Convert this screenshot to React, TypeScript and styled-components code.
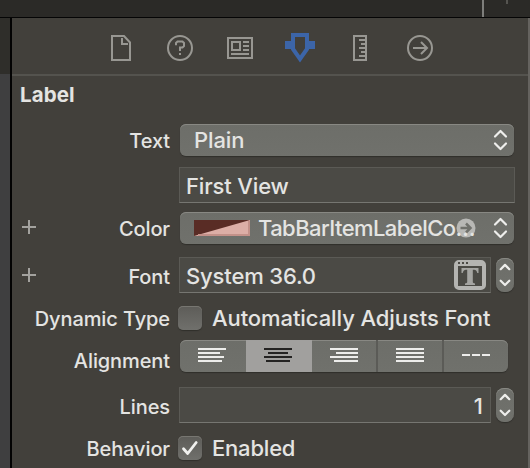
import React from 'react';
import styled, { createGlobalStyle, css } from 'styled-components';

const GlobalStyle = createGlobalStyle`
  * { box-sizing: border-box; }
  body { margin: 0; overflow: hidden; background: #42403b; }
`;

const Window = styled.div`
  width: 530px;
  height: 468px;
  display: flex;
  flex-direction: column;
  overflow: hidden;
  background: #42403b;
  color: #e4e4e2;
  font-family: Inter, 'Liberation Sans', sans-serif;
  font-weight: 500;
`;

const TitleStrip = styled.div`
  height: 18px;
  flex: none;
  display: flex;
  align-items: flex-start;
  padding-left: 482px;
  gap: 22px;
  background: #2b2a27;
  border-bottom: 1px solid #050505;
`;

const Tick = styled.span<{ $height: number; $color: string }>`
  width: 2px;
  height: ${p => p.$height}px;
  background: ${p => p.$color};
`;

const Body = styled.div`
  flex: 1;
  min-height: 0;
  display: flex;
`;

const Gutter = styled.div`
  width: 12px;
  flex: none;
  border-right: 2px solid #030303;
  background: linear-gradient(#2f2e2a 56px, #3f3f40 56px);
`;

const Inspector = styled.section`
  width: 518px;
  border-right: 2px solid #65635f;
`;

const Tabs = styled.nav`
  height: 58px;
  display: flex;
  justify-content: center;
  gap: 30px;
  padding-top: 15px;
  border-bottom: 2px solid #54534e;
`;

const Tab = styled.button<{ $active?: boolean }>`
  width: 30px;
  height: 30px;
  padding: 0;
  border: 0;
  background: none;
  color: ${p => (p.$active ? '#3c65a8' : '#989792')};
  svg { display: block; }
`;

const Heading = styled.h2`
  margin: 0;
  height: 48px;
  padding: 6px 0 0 8px;
  font-size: 20.5px;
  line-height: 25px;
  font-weight: 700;
  letter-spacing: 0.1px;
`;

const Row = styled.div<{ $height: number; $gap?: number }>`
  height: ${p => p.$height}px;
  margin-top: ${p => p.$gap ?? 0}px;
  display: flex;
  align-items: center;
`;

const RowLabel = styled.div<{ $drop?: number; $plusDrop?: number }>`
  width: 158px;
  flex: none;
  display: flex;
  justify-content: flex-end;
  align-items: center;
  margin-right: 10px;
  font-size: 20px;
  line-height: 24px;
  letter-spacing: -0.1px;
  white-space: nowrap;
  span { padding-top: ${p => p.$drop ?? 0}px; }
  svg { margin: ${p => p.$plusDrop ?? 0}px auto 2px 10px; }
`;

const raised = css`
  background: linear-gradient(#6d6e69, #70716c);
  box-shadow: inset 0 1px 0 #888883, 0 1px 1px #302f2b;
`;

const Popup = styled.div`
  width: 334px;
  height: 32px;
  display: flex;
  align-items: center;
  padding: 0 6px 0 14px;
  border-radius: 6px;
  ${raised}
`;

const Value = styled.span<{ $spacing?: number }>`
  flex: 1;
  font-size: 22px;
  line-height: 28px;
  letter-spacing: ${p => p.$spacing ?? 0}px;
  white-space: nowrap;
`;

const Swatch = styled.svg`
  margin-right: 8px;
  flex: none;
`;

const ColorName = styled(Value)`
  position: relative;
  isolation: isolate;
`;

const Jump = styled.svg`
  position: absolute;
  z-index: -1;
  left: 198px;
  top: 4px;
`;

const Field = styled.div<{ $wide?: boolean; $end?: boolean }>`
  width: ${p => (p.$wide ? 336 : 312)}px;
  height: 36px;
  margin-left: -1px;
  display: flex;
  align-items: center;
  padding: 0 ${p => (p.$end ? 7 : 4)}px 0 6px;
  text-align: ${p => (p.$end ? 'right' : 'left')};
  background: #4b4a45;
  border: 1px solid #5b5a55;
  border-bottom-color: #767671;
  ${Value} { padding-top: 2px; }
`;

const StepperBox = styled.div`
  width: 18px;
  height: 34px;
  margin-left: 5px;
  border-radius: 8px;
  ${raised}
  svg { display: block; }
`;

const CheckBox = styled.span`
  width: 24px;
  height: 24px;
  margin: 0 10px 0 -2px;
  border-radius: 5px;
  background: linear-gradient(#5d5c58, #70706c);
  box-shadow: inset 0 1px 0 #777671, 0 1px 1px #302f2b;
  svg { display: block; }
`;

const Segments = styled.div`
  width: 328px;
  height: 32px;
  display: grid;
  grid-template-columns: 66px 66px 66px 66px 64px;
  border-radius: 6px;
  overflow: hidden;
  ${raised}
`;

const Segment = styled.button<{ $selected?: boolean; $divided?: boolean }>`
  display: flex;
  align-items: flex-start;
  justify-content: flex-start;
  padding: 0;
  border: 0;
  border-right: ${p => (p.$divided ? '2px solid #5b5b57' : '0')};
  background: ${p => (p.$selected ? '#a1a09e' : 'none')};
  color: ${p => (p.$selected ? '#242322' : '#ededeb')};
`;

function Plus() {
  return (
    <svg width="14" height="14" viewBox="0 0 14 14" stroke="#a3a29e" strokeWidth="2">
      <path d="M7 0v14M0 7h14" />
    </svg>
  );
}

function PopupArrows() {
  return (
    <svg width="15" height="22" viewBox="0 0 15 22" fill="none" stroke="#eeeeec" strokeWidth="2.2" strokeLinecap="round" strokeLinejoin="round">
      <path d="M2 7.5 7.5 2 13 7.5M2 14.5 7.5 20 13 14.5" />
    </svg>
  );
}

function Stepper() {
  return (
    <StepperBox>
      <svg width="18" height="34" viewBox="0 0 18 34" fill="none" stroke="#eeeeec" strokeWidth="2.2" strokeLinecap="round" strokeLinejoin="round">
        <path d="M4.7 11.2 9 6.9l4.3 4.3M4.7 22.7 9 27l4.3-4.3" />
      </svg>
    </StepperBox>
  );
}

function TabIcon({ children }: { children: React.ReactNode }) {
  return <svg width="30" height="30" viewBox="0 0 30 30" fill="none" stroke="currentColor" strokeWidth="2">{children}</svg>;
}

// Each bar is [x, y, width] inside a segment.
const alignments: [number, number, number][][] = [
  [[18, 8, 28], [18, 12, 22], [18, 16, 26], [18, 20, 24]],
  [[18, 8, 28], [22, 12, 20], [18, 16, 28], [20, 20, 24]],
  [[18, 8, 28], [24, 12, 22], [18, 16, 28], [22, 20, 24]],
  [[18, 8, 28], [18, 12, 28], [18, 16, 28], [18, 20, 28]],
  [[18, 14, 8], [28, 14, 8], [38, 14, 8]],
];

export default function App() {
  return (
    <>
      <GlobalStyle />
      <Window>
        <TitleStrip>
          <Tick $height={17} $color="#7e7e7b" />
          <Tick $height={4} $color="#555450" />
        </TitleStrip>
        <Body>
          <Gutter />
          <Inspector>
            <Tabs>
              <Tab aria-label="File">
                <TabIcon><path d="M7 3h12l6 6.5V27H7Z" /><path d="M17 5v6h6" /></TabIcon>
              </Tab>
              <Tab aria-label="Help">
                <TabIcon><circle cx="15" cy="15" r="12" /><path d="M11 12.2V10l1.5-1.5h5L19 10v3l-1.5 1.5H15V18M15 20v2" /></TabIcon>
              </Tab>
              <Tab aria-label="Identity">
                <TabIcon><path d="M3 5h24v20H3ZM7 9h8v8H7ZM18 9h6M18 13h6M18 17h6M6 21h18" /></TabIcon>
              </Tab>
              <Tab aria-label="Attributes" $active>
                <TabIcon><path d="M0 8h8v8H0ZM22 8h8v8h-8Z" fill="currentColor" stroke="none" /><path d="M8 2h14v14l-7 10-7-10Z" strokeWidth="4" stroke="currentColor" strokeMiterlimit="8" /></TabIcon>
              </Tab>
              <Tab aria-label="Size">
                <TabIcon><path d="M9 3h12v24H9ZM14 7h6M16 11h4M14 15h6M16 19h4M14 23h6" /></TabIcon>
              </Tab>
              <Tab aria-label="Connections">
                <TabIcon><circle cx="15" cy="15" r="12" /><path d="M8 15h13M16 9l6 6-6 6" /></TabIcon>
              </Tab>
            </Tabs>
            <Heading>Label</Heading>
            <Row $height={32}>
              <RowLabel $drop={1}><span>Text</span></RowLabel>
              <Popup><Value $spacing={-0.1}>Plain</Value><PopupArrows /></Popup>
            </Row>
            <Row $height={36} $gap={11}>
              <RowLabel />
              <Field $wide><Value $spacing={-0.15}>First View</Value></Field>
            </Row>
            <Row $height={32} $gap={9}>
              <RowLabel $drop={1}><Plus /><span>Color</span></RowLabel>
              <Popup>
                <Swatch width="56" height="16" viewBox="0 0 56 16">
                  <path d="M0 0h56v16H0Z" fill="#592c25" />
                  <path d="M56 0v16H0Z" fill="#dcaea6" />
                  <path d="M55 1v14H4" fill="none" stroke="#c39189" strokeWidth="2" />
                </Swatch>
                <ColorName $spacing={-0.57}>
                  TabBarItemLabelCo…
                  <Jump width="20" height="20" viewBox="0 0 20 20">
                    <circle cx="10" cy="10" r="9.5" fill="#b8b8b5" />
                    <path d="M4.5 10H14M10 5.5l4.5 4.5-4.5 4.5" fill="none" stroke="#70716c" strokeWidth="2.5" />
                  </Jump>
                </ColorName>
                <PopupArrows />
              </Popup>
            </Row>
            <Row $height={36} $gap={13}>
              <RowLabel $drop={3} $plusDrop={1}><Plus /><span>Font</span></RowLabel>
              <Field>
                <Value $spacing={-0.15}>System 36.0</Value>
                <svg width="32" height="30" viewBox="0 0 32 30">
                  <path fillRule="evenodd" fill="#b4b4b1" d="M5 0h22a5 5 0 0 1 5 5v20a5 5 0 0 1-5 5H5a5 5 0 0 1-5-5V5a5 5 0 0 1 5-5ZM4 6v20h24V6Z" />
                  <path fill="#4b4a45" d="M4 2h2v2H4ZM8 2h2v2H8ZM12 2h2v2h-2Z" />
                  <path fill="#a5a5a2" d="M7.5 8h17v5h-1.2q-.8-3.2-3.2-3.2h-1.3v12.4q0 1 2.2 1.2V25H11v-1.6q2.2-.2 2.2-1.2V9.8H12q-2.500 0-3.300 3.200H7.5Z" />
                </svg>
              </Field>
              <Stepper />
            </Row>
            <Row $height={24} $gap={13}>
              <RowLabel $drop={2}><span>Dynamic Type</span></RowLabel>
              <CheckBox />
              <Value $spacing={-0.08}>Automatically Adjusts Font</Value>
            </Row>
            <Row $height={32} $gap={10}>
              <RowLabel $drop={9}><span>Alignment</span></RowLabel>
              <Segments>
                {alignments.map((bars, i) => (
                  <Segment key={i} $selected={i === 1} $divided={i === 2 || i === 3} aria-label={`Alignment ${i + 1}`}>
                    <svg width="64" height="32" viewBox="0 0 64 32" fill="currentColor">
                      {bars.map(([x, y, w]) => <rect key={`${x}-${y}`} x={x} y={y} width={w} height="2" />)}
                    </svg>
                  </Segment>
                ))}
              </Segments>
            </Row>
            <Row $height={36} $gap={15}>
              <RowLabel $drop={3}><span>Lines</span></RowLabel>
              <Field $end><Value>1</Value></Field>
              <Stepper />
            </Row>
            <Row $height={24} $gap={13}>
              <RowLabel $drop={2}><span>Behavior</span></RowLabel>
              <CheckBox>
                <svg width="24" height="24" viewBox="0 0 24 24" fill="none" stroke="#f0f0ee" strokeWidth="2.8" strokeLinecap="round" strokeLinejoin="round">
                  <path d="m5.5 12.8 4.2 4.7L18.2 6.5" />
                </svg>
              </CheckBox>
              <Value $spacing={-0.2}>Enabled</Value>
            </Row>
          </Inspector>
        </Body>
      </Window>
    </>
  );
}
